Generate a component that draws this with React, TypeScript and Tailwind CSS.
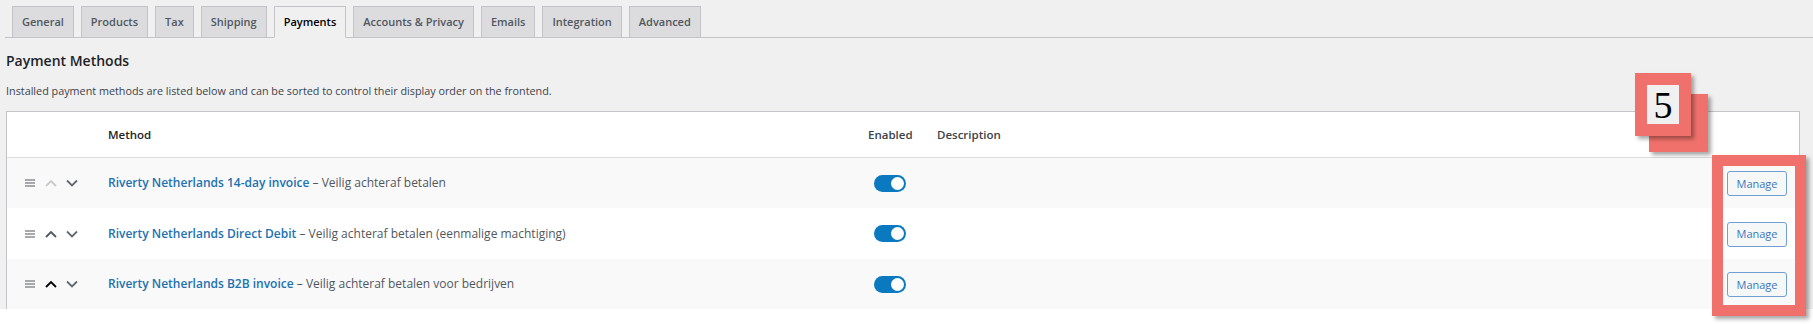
const tabs = [
  "General",
  "Products",
  "Tax",
  "Shipping",
  "Payments",
  "Accounts & Privacy",
  "Emails",
  "Integration",
  "Advanced",
];

type Method = {
  name: string;
  desc: string;
  up: "disabled" | "normal" | "active";
  striped: boolean;
};

const methods: Method[] = [
  { name: "Riverty Netherlands 14-day invoice", desc: "Veilig achteraf betalen", up: "disabled", striped: true },
  { name: "Riverty Netherlands Direct Debit", desc: "Veilig achteraf betalen (eenmalige machtiging)", up: "normal", striped: false },
  { name: "Riverty Netherlands B2B invoice", desc: "Veilig achteraf betalen voor bedrijven", up: "active", striped: true },
];

const upColor = {
  disabled: "text-[#c8cacd]",
  normal: "text-[#50575e]",
  active: "text-black",
};

const DragIcon = () => (
  <svg width="10" height="8" viewBox="0 0 10 8" className="text-[#8c8f94]">
    <path d="M0 1h10M0 4h10M0 7h10" stroke="currentColor" strokeWidth="1.4" />
  </svg>
);

const Chevron = ({ dir, className }: { dir: "up" | "down"; className: string }) => (
  <svg width="12" height="8" viewBox="0 0 12 8" className={className}>
    <polyline
      points={dir === "up" ? "1,7 6,2 11,7" : "1,1.5 6,6.5 11,1.5"}
      fill="none"
      stroke="currentColor"
      strokeWidth="1.8"
    />
  </svg>
);

const Toggle = () => (
  <div className="w-[32px] h-[17px] rounded-full bg-[#0a79c0] flex items-center justify-end pr-[2px]">
    <div className="w-[13px] h-[13px] rounded-full bg-white" />
  </div>
);

export default function App() {
  return (
    <div className="relative w-[1813px] h-[324px] overflow-hidden bg-[#f0f0f1] flex flex-col font-['Open_Sans','Noto_Sans',sans-serif]">
      {/* tabs */}
      <nav className="ml-[5px] pl-[7px] pt-[6px] h-[38px] flex gap-[7px] border-b border-[#c3c4c7]">
        {tabs.map((t) => {
          const active = t === "Payments";
          return (
            <div
              key={t}
              className={
                active
                  ? "h-[32px] -mb-px px-[9px] flex items-center border border-[#c3c4c7] border-b-[#f0f0f1] bg-[#f0f0f1] text-[11px] font-semibold text-black whitespace-nowrap"
                  : "h-[31px] px-[9px] flex items-center border border-b-0 border-[#c3c4c7] bg-[#dcdcde] text-[11px] font-semibold text-[#50575e] whitespace-nowrap"
              }
            >
              {t}
            </div>
          );
        })}
      </nav>

      <h2 className="mt-[13px] ml-[6px] text-[14px] leading-[20px] font-semibold text-[#1d2327]">Payment Methods</h2>
      <p className="mt-[12px] ml-[6px] text-[10.8px] leading-[16px] text-[#3c434a]">
        Installed payment methods are listed below and can be sorted to control their display order on the frontend.
      </p>

      {/* table */}
      <div className="mt-[12px] ml-[6px] mr-[13px] bg-white border-x border-t border-[#c3c4c7]">
        <div className="h-[46px] flex items-center border-b border-[#dcdcde] text-[11.5px] font-semibold text-[#1d2327]">
          <div className="w-[101px]" />
          <div className="w-[760px]">Method</div>
          <div className="w-[69px] text-[#3c434a]">Enabled</div>
          <div className="flex-1 text-[#3c434a]">Description</div>
        </div>
        {methods.map((m, i) => (
          <div
            key={m.name}
            className={`${i === 1 ? "h-[51px]" : "h-[50px]"} flex items-center ${m.striped ? "bg-[#f9f9f9]" : "bg-white"}`}
          >
            <div className="w-[101px] pl-[18px] flex items-center gap-[10px]">
              <DragIcon />
              <div className="flex items-center gap-[9px]">
                <Chevron dir="up" className={upColor[m.up]} />
                <Chevron dir="down" className="text-[#646970]" />
              </div>
            </div>
            <div className="w-[760px] text-[12px] whitespace-nowrap">
              <span className="font-semibold text-[#2271b1]">{m.name}</span>
              <span className="text-[#50575e]"> – {m.desc}</span>
            </div>
            <div className="w-[69px] pl-[6px]">
              <Toggle />
            </div>
            <div className="flex-1" />
            <div className="pr-[12px]">
              <button className="w-[60px] h-[25px] rounded-[3px] border border-[#6f9fd3] bg-[#f6f7f7] text-[11px] text-[#3b78c0]">
                Manage
              </button>
            </div>
          </div>
        ))}
      </div>
      <div className="flex-1 bg-white" />

      {/* annotation callouts */}
      <div className="absolute left-[1649px] top-[94px] w-[59px] h-[58px] bg-[#f0716b] shadow-[3px_3px_4px_rgba(0,0,0,0.35)]" />
      <div className="absolute left-[1635px] top-[73px] w-[56px] h-[63px] border-[12px] border-[#f0716b] bg-[#f0f0f0] shadow-[3px_3px_4px_rgba(0,0,0,0.35)] flex items-center justify-center">
        <span className="font-['Liberation_Serif',serif] text-[38px] leading-none text-black">5</span>
      </div>
      <div className="absolute left-[1712px] top-[155px] w-[94px] h-[161px] border-[11px] border-[#f0716b] shadow-[3px_3px_4px_rgba(0,0,0,0.35)]" />
    </div>
  );
}
